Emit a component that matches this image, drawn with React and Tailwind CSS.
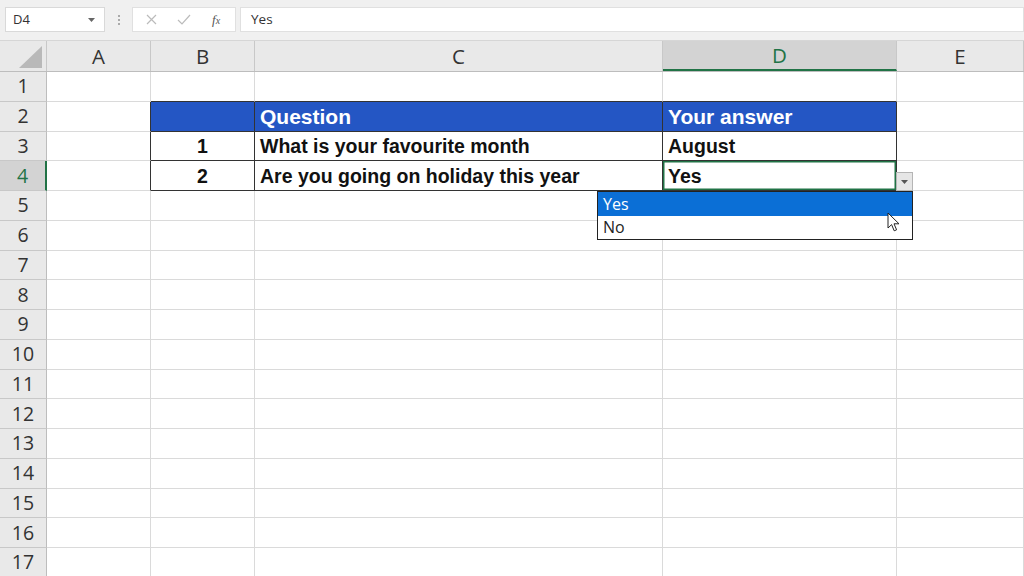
import React from 'react';

const COLS = ['A', 'B', 'C', 'D', 'E'];
const ROWS = Array.from({ length: 17 }, (_, i) => i + 1);

const TABLE = {
  2: { B: '', C: 'Question', D: 'Your answer' },
  3: { B: '1', C: 'What is your favourite month', D: 'August' },
  4: { B: '2', C: 'Are you going on holiday this year', D: 'Yes' },
};

const inTable = (row, col) => row >= 2 && row <= 4 && ['B', 'C', 'D'].includes(col);

function Cursor() {
  return (
    <svg width="14" height="21" viewBox="0 0 14 21" className="absolute left-[887px] top-[212px]">
      <path d="M1 1 L1 16 L4.6 12.6 L7.2 18.8 L9.6 17.8 L7 11.8 L12 11.8 Z" fill="#fff" stroke="#222" strokeWidth="1" strokeLinejoin="round" />
    </svg>
  );
}

function FormulaBar() {
  return (
    <div className="flex h-[41px] items-start bg-[#f0f0f0] pt-[7px] border-b border-[#d6d6d6]">
      <div className="ml-[5px] flex h-[25px] w-[100px] items-center justify-between border border-[#d9d9d9] bg-white pl-[7px] pr-[9px]">
        <span className="text-[13px] text-[#333]">D4</span>
        <svg width="7" height="4" viewBox="0 0 7 4"><path d="M0 0 L7 0 L3.5 4 Z" fill="#666" /></svg>
      </div>
      <div className="flex h-[25px] w-[27px] flex-col items-center justify-center gap-[2px]">
        <span className="h-[2px] w-[2px] bg-[#aaa]" />
        <span className="h-[2px] w-[2px] bg-[#aaa]" />
        <span className="h-[2px] w-[2px] bg-[#aaa]" />
      </div>
      <div className="flex h-[25px] w-[104px] items-center border border-[#e0e0e0] bg-white">
        <svg width="11" height="11" viewBox="0 0 11 11" className="ml-[13px]">
          <path d="M1 1 L10 10 M10 1 L1 10" stroke="#bbb" strokeWidth="1.2" />
        </svg>
        <svg width="14" height="11" viewBox="0 0 14 11" className="ml-[20px]">
          <path d="M1 6 L5 10 L13 1" stroke="#bbb" strokeWidth="1.2" fill="none" />
        </svg>
        <span className="ml-[21px] text-[13px] italic text-[#555] font-['Liberation_Serif',serif]">
          f<span className="text-[10px]">x</span>
        </span>
      </div>
      <div className="ml-[4px] flex h-[25px] flex-1 items-center border border-[#e0e0e0] bg-white pl-[10px]">
        <span className="text-[13.5px] text-[#333]">Yes</span>
      </div>
    </div>
  );
}

function ColumnHeader() {
  return (
    <div className="grid h-[31px] grid-cols-[47px_104px_104px_408px_234px_1fr] border-b border-[#bdbdbd] bg-[#e9e9e9]">
      <div className="relative border-r border-[#c8c8c8]">
        <div className="absolute right-[4px] bottom-[3px] h-0 w-0 border-l-[23px] border-l-transparent [border-bottom:22px_solid_#b9b9b9]" />
      </div>
      {COLS.map((c) => (
        <div
          key={c}
          className={
            c === 'D'
              ? 'flex items-center justify-center border-r border-[#c8c8c8] bg-[#d3d3d3] border-b-2 border-b-[#217346] text-[#217346] text-[20.5px] leading-[26px]'
              : 'flex items-center justify-center border-r border-[#c8c8c8] text-[#333] text-[20.5px] leading-[26px]'
          }
        >
          {c}
        </div>
      ))}
    </div>
  );
}

function Cell({ row, col }) {
  const data = TABLE[row];
  const value = data ? data[col] : '';
  const isHeader = row === 2 && inTable(row, col);
  const table = inTable(row, col);
  const selected = row === 4 && col === 'D';

  let cls = 'flex min-h-0 items-center pt-[1px] leading-[24px] border-r border-b overflow-hidden whitespace-nowrap ';
  // dark edge where the cell borders the table
  const rightDark = table || (col === 'A' && row >= 2 && row <= 4);
  const bottomDark = table || (row === 1 && ['B', 'C', 'D'].includes(col));
  cls += rightDark ? 'border-r-[#333] ' : 'border-r-[#dadada] ';
  cls += bottomDark ? 'border-b-[#333] ' : 'border-b-[#dadada] ';
  if (isHeader) cls += 'bg-[#2456c4] text-white text-[21px] font-bold ';
  else if (table) cls += 'bg-white text-[#111] text-[19.5px] font-bold ';
  else cls += 'bg-white ';
  cls += col === 'B' ? 'justify-center ' : 'pl-[5px] ';
  if (selected) cls += 'shadow-[inset_0_0_0_1.5px_#217346] ';

  return <div className={cls}>{value}</div>;
}

export default function App() {
  return (
    <div className="relative h-[576px] w-[1024px] overflow-hidden bg-white font-['Liberation_Sans',Arial,sans-serif]">
      <div className="font-['Open_Sans','Noto_Sans',sans-serif]">
        <FormulaBar />
        <ColumnHeader />
      </div>
      {ROWS.map((r) => (
        <div key={r} className="grid h-[29.75px] grid-rows-[29.75px] grid-cols-[47px_104px_104px_408px_234px_1fr]">
          <div
            className={
              r === 4
                ? "flex min-h-0 items-center justify-center leading-[24px] bg-[#d3d3d3] border-r-2 border-r-[#217346] border-b border-b-[#c8c8c8] text-[19.5px] text-[#217346] font-['Open_Sans',sans-serif]"
                : "flex min-h-0 items-center justify-center leading-[24px] bg-[#e9e9e9] border-r border-r-[#bdbdbd] border-b border-b-[#c8c8c8] text-[19.5px] text-[#333] font-['Open_Sans',sans-serif]"
            }
          >
            {r}
          </div>
          {COLS.map((c) => (
            <Cell key={c} row={r} col={c} />
          ))}
        </div>
      ))}

      {/* validation dropdown */}
      <div className="absolute left-[896px] top-[172px] flex h-[19px] w-[17px] items-center justify-center border border-[#b5b5b5] bg-[#e6e6e6]">
        <svg width="7" height="4" viewBox="0 0 7 4"><path d="M0 0 L7 0 L3.5 4 Z" fill="#555" /></svg>
      </div>
      <div className="absolute left-[597px] top-[191px] w-[316px] border border-[#222] bg-white font-['Open_Sans','Noto_Sans',sans-serif] text-[16px] leading-[23px]">
        <div className="bg-[#0b6fd6] pl-[5px] pt-[1px] text-white">Yes</div>
        <div className="pl-[5px] text-[#222]">No</div>
      </div>
      <Cursor />
    </div>
  );
}
